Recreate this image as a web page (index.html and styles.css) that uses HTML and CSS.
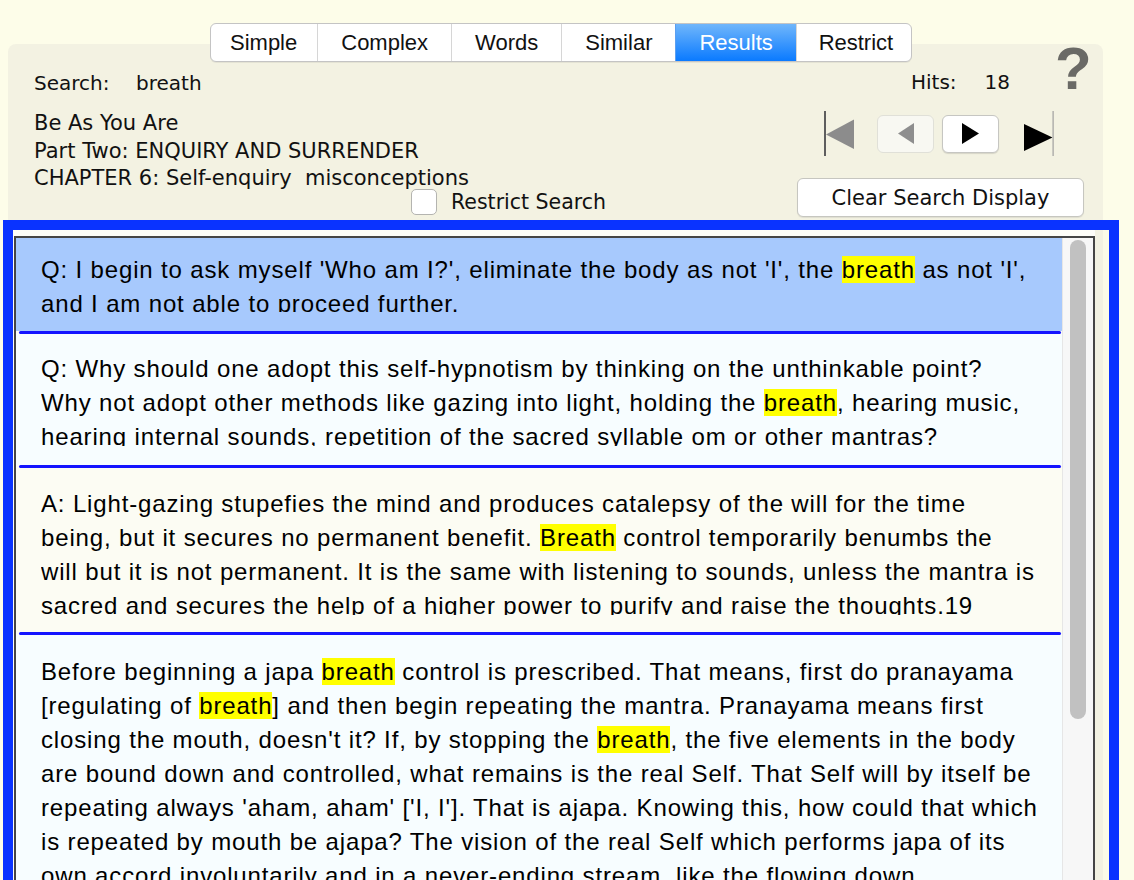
FILE: index.html
```html
<!DOCTYPE html>
<html lang="en">
<head>
<meta charset="utf-8">
<title>Search Results</title>
<link rel="stylesheet" href="styles.css">
</head>
<body>
<div class="app">
  <div class="tabs">
    <div class="tab">Simple</div>
    <div class="tab">Complex</div>
    <div class="tab">Words</div>
    <div class="tab">Similar</div>
    <div class="tab active">Results</div>
    <div class="tab">Restrict</div>
  </div>
  <div class="panel">
    <div class="top">
      <div class="info">
        <div class="search-line"><span class="lbl">Search:</span><span>breath</span></div>
        <div class="book">
          <div>Be As You Are</div>
          <div>Part Two: ENQUIRY AND SURRENDER</div>
          <div>CHAPTER 6: Self-enquiry&nbsp; misconceptions</div>
        </div>
        <div class="restrict"><span class="check"></span><span>Restrict Search</span></div>
      </div>
      <div class="controls">
        <div class="hits"><span>Hits:</span><span class="count">18</span><span class="help">?</span></div>
        <div class="nav">
          <svg class="first" width="31" height="45" viewBox="0 0 31 45"><rect x="0" y="0" width="2" height="45" fill="#5e5e5e"/><polygon points="2,23.5 30,8.5 30,38" fill="#8c8c8c"/></svg>
          <div class="navbtn prev"><svg width="16" height="21" viewBox="0 0 16 21"><polygon points="0,10.5 16,0 16,21" fill="#8e8e8e"/></svg></div>
          <div class="navbtn next"><svg width="17" height="21" viewBox="0 0 17 21"><polygon points="0,0 17,10.5 0,21" fill="#000"/></svg></div>
          <svg class="last" width="31" height="45" viewBox="0 0 31 45"><polygon points="0,13 28.5,26.5 0,40" fill="#000"/><rect x="28.5" y="0" width="1.2" height="45" fill="#a0a0a0"/></svg>
        </div>
        <div class="clear">Clear Search Display</div>
      </div>
    </div>
    <div class="frame">
      <div class="pane">
        <div class="list">
          <div class="rows">
            <div class="row selected p1">
              <div class="txt l2">Q: I begin to ask myself 'Who am I?', eliminate the body as not 'I', the <span class="hl">breath</span> as not 'I', and I am not able to proceed further.</div>
            </div>
            <div class="sep"></div>
            <div class="row cyan p2">
              <div class="txt l3">Q: Why should one adopt this self-hypnotism by thinking on the unthinkable point? Why not adopt other methods like gazing into light, holding the <span class="hl">breath</span>, hearing music, hearing internal sounds, repetition of the sacred syllable om or other mantras?</div>
            </div>
            <div class="sep"></div>
            <div class="row cream p3">
              <div class="txt l4">A: Light-gazing stupefies the mind and produces catalepsy of the will for the time being, but it secures no permanent benefit. <span class="hl">Breath</span> control temporarily benumbs the<br>will but it is not permanent. It is the same with listening to sounds, unless the mantra is sacred and secures the help of a higher power to purify and raise the thoughts.19</div>
            </div>
            <div class="sep"></div>
            <div class="row cyan p4">
              <div class="txt l8">Before beginning a japa <span class="hl">breath</span> control is prescribed. That means, first do pranayama [regulating of <span class="hl">breath</span>] and then begin repeating the mantra. Pranayama means first closing the mouth, doesn't it? If, by stopping the <span class="hl">breath</span>, the five elements in the body are bound down and controlled, what remains is the real Self. That Self will by itself be repeating always 'aham, aham' ['I, I']. That is ajapa. Knowing this, how could that which is repeated by mouth be ajapa? The vision of the real Self which performs japa of its own accord involuntarily and in a never-ending stream, like the flowing down<br>of oil, is ajapa, gayatri, and everything.</div>
            </div>
          </div>
          <div class="scrollbar"><div class="thumb"></div></div>
        </div>
      </div>
    </div>
  </div>
</div>
</body>
</html>
```

FILE: styles.css
```css
html, body {
  margin: 0;
  padding: 0;
  overflow: hidden;
  height: 100%;
}
body {
  background: #fdfde9;
  font-family: "DejaVu Sans", "Lucida Grande", sans-serif;
  color: #111;
}
.app {
  padding-top: 23px;
}

/* ---------- tabs ---------- */
.tabs {
  position: relative;
  z-index: 1;
  display: flex;
  width: 700px;
  height: 37px;
  margin-left: 210px;
  border: 1px solid #c4c4c4;
  border-radius: 6px;
  background: #fff;
  overflow: hidden;
  box-shadow: 0 1px 0 rgba(0, 0, 0, 0.06);
  font-family: "Liberation Sans", Arial, sans-serif;
  font-size: 22px;
}
.tab {
  display: flex;
  align-items: center;
  justify-content: center;
  padding: 0 23px;
  border-left: 1px solid #d6d6d6;
  color: #111;
  flex: none;
}
.tab:first-child {
  border-left: none;
  padding: 0 20px 0 19px;
}
.tab:last-child {
  flex: 1;
  padding: 0 0 0 4px;
}
.tab.active {
  background: linear-gradient(#70b6fb, #0a7aff);
  color: #fff;
  border-left-color: #5b9ff0;
}

/* ---------- panel ---------- */
.panel {
  margin: -18px 0 0 8px;
  width: 1095px;
  background: #f3f2e2;
  border-radius: 8px;
  font-size: 20px;
}
.top {
  display: flex;
  height: 176px;
  padding-left: 26px;
}
.info {
  flex: 1;
  padding-top: 25px;
  line-height: 28px;
}
.lbl {
  display: inline-block;
  width: 102px;
}
.book {
  margin-top: 13px;
  line-height: 27.5px;
  font-size: 21px;
}
.restrict {
  display: flex;
  align-items: center;
  gap: 14px;
  height: 26px;
  margin: -4px 0 0 377px;
  line-height: 26px;
  font-size: 20.5px;
}
.check {
  width: 24px;
  height: 24px;
  background: #fff;
  border: 1px solid #b4b4b0;
  border-radius: 5px;
}

.controls {
  width: 287px;
  margin-right: 19px;
  display: flex;
  flex-direction: column;
}
.hits {
  display: flex;
  align-items: baseline;
  padding: 11px 0 0 114px;
  line-height: 28px;
}
.count {
  margin-left: 28px;
}
.help {
  margin-left: 45px;
  font-family: "Liberation Sans", Arial, sans-serif;
  font-weight: bold;
  font-size: 60px;
  line-height: 28px;
  color: #6a6a66;
}
.nav {
  display: flex;
  align-items: center;
  height: 45px;
  margin-top: 15px;
  padding-left: 27px;
}
.navbtn {
  display: flex;
  align-items: center;
  justify-content: center;
  width: 55px;
  height: 36px;
  border-radius: 6px;
}
.prev {
  margin-left: 22px;
  background: #f8f8f2;
  border: 1px solid #e0e0d8;
}
.next {
  margin-left: 8px;
  background: #fff;
  border: 1px solid #c6c6c2;
  box-shadow: 0 1px 1px rgba(0, 0, 0, 0.12);
}
.last {
  margin-left: 25px;
}
.clear {
  margin-top: 22px;
  height: 37px;
  display: flex;
  align-items: center;
  justify-content: center;
  background: #fff;
  border: 1px solid #c6c6c0;
  border-radius: 6px;
  box-shadow: 0 1px 1px rgba(0, 0, 0, 0.08);
  font-size: 21px;
}

/* ---------- results frame ---------- */
.frame {
  margin: 0 -16px 0 -5px;
  border: 10px solid #0a33ff;
  border-bottom: none;
  background: linear-gradient(to right, #f3f2e2 1090px, #fbfbe8 1090px);
}
.pane {
  margin-right: 14px;
  padding: 6px 0 0 1px;
  background: #fdfdf8;
}
.list {
  display: flex;
  height: 680px;
  border: 2px solid #454545;
  border-bottom: none;
  overflow: hidden;
  font-family: "Liberation Sans", Arial, sans-serif;
  font-size: 24px;
  line-height: 34px;
  letter-spacing: 0.85px;
  color: #000;
}
.rows {
  flex: 1;
  min-width: 0;
}
.row {
  padding: 0 22px 19px 25px;
}
.row.p1 { padding-top: 15px; }
.row.p2 { padding-top: 18px; }
.row.p3 { padding-top: 19px; padding-bottom: 17px; }
.row.p4 { padding-top: 20px; }
.selected { background: #a7c9fd; }
.cyan { background: #f7fdff; }
.cream { background: #fcfcf3; }
.txt {
  overflow: hidden;
}
.l2 { height: 59px; }
.l3 { height: 94px; }
.l4 { height: 128px; }
.l8 { height: 300px; }
.hl {
  background: #ffff00;
}
.sep {
  height: 3px;
  margin: 0 1px 0 3px;
  border-radius: 2px;
  background: #1414ff;
}
.scrollbar {
  flex: none;
  width: 30px;
  background: #f7f7f7;
  border-left: 1px solid #e6e6e6;
}
.thumb {
  width: 16px;
  height: 479px;
  margin: 2px 0 0 7px;
  border-radius: 8px;
  background: #c1c1c1;
}
```
